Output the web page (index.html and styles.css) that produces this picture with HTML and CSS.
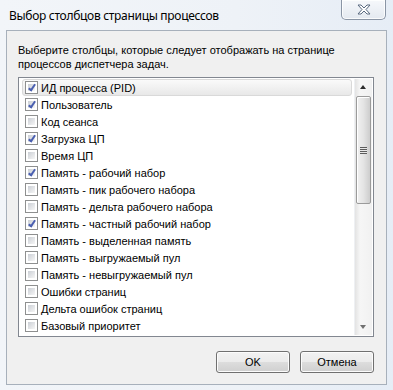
FILE: index.html
```html
<!DOCTYPE html>
<html lang="ru">
<head>
<meta charset="utf-8">
<link rel="stylesheet" href="styles.css">
</head>
<body>
<div class="window">
  <div class="titlebar">
    <span class="title">Выбор столбцов страницы процессов</span>
    <div class="close">
      <svg width="16" height="11" viewBox="0 0 16 11"><path d="M2 1 L5 1 L8 4 L11 1 L14 1 L10 5.5 L14 10 L11 10 L8 7 L5 10 L2 10 L6 5.5 Z" fill="#fff" stroke="#5a6a80" stroke-width="1" stroke-linejoin="round"/></svg>
    </div>
  </div>
  <div class="client">
    <p class="intro">Выберите столбцы, которые следует отображать на странице<br>процессов диспетчера задач.</p>
    <div class="listbox">
      <div class="items">
        <div class="row sel"><span class="cb on"></span>ИД процесса (PID)</div>
        <div class="row"><span class="cb on"></span>Пользователь</div>
        <div class="row"><span class="cb"></span>Код сеанса</div>
        <div class="row"><span class="cb on"></span>Загрузка ЦП</div>
        <div class="row"><span class="cb"></span>Время ЦП</div>
        <div class="row"><span class="cb on"></span>Память - рабочий набор</div>
        <div class="row"><span class="cb"></span>Память - пик рабочего набора</div>
        <div class="row"><span class="cb"></span>Память - дельта рабочего набора</div>
        <div class="row"><span class="cb on"></span>Память - частный рабочий набор</div>
        <div class="row"><span class="cb"></span>Память - выделенная память</div>
        <div class="row"><span class="cb"></span>Память - выгружаемый пул</div>
        <div class="row"><span class="cb"></span>Память - невыгружаемый пул</div>
        <div class="row"><span class="cb"></span>Ошибки страниц</div>
        <div class="row"><span class="cb"></span>Дельта ошибок страниц</div>
        <div class="row"><span class="cb"></span>Базовый приоритет</div>
      </div>
      <div class="scrollbar">
        <div class="arrow up"></div>
        <div class="track">
          <div class="thumb"><span class="grip"></span></div>
        </div>
        <div class="arrow down"></div>
      </div>
    </div>
    <div class="buttons">
      <button class="btn">OK</button>
      <button class="btn">Отмена</button>
    </div>
  </div>
</div>
</body>
</html>
```
FILE: styles.css
```css
html, body {
  margin: 0;
  padding: 0;
}
body {
  width: 393px;
  height: 390px;
  overflow: hidden;
  background: linear-gradient(90deg, #f2f5f9 0%, #eef2f7 60%, #e6edf6 100%);
  font-family: "Liberation Sans", Arial, sans-serif;
  font-size: 11px;
  color: #000;
}
.window {
  width: 393px;
  height: 390px;
  display: flex;
  flex-direction: column;
}
.titlebar {
  height: 30px;
  display: flex;
  align-items: flex-start;
  justify-content: space-between;
  padding-left: 9px;
  padding-right: 7px;
  box-sizing: border-box;
}
.title {
  margin-top: 8px;
  font-family: "Noto Sans", "Open Sans", sans-serif;
  font-size: 12px;
  letter-spacing: -0.3px;
  line-height: 16px;
  color: #000;
}
.close {
  width: 45px;
  height: 20px;
  box-sizing: border-box;
  border: 1px solid #8a95a5;
  border-top: none;
  border-radius: 0 0 5px 5px;
  background: linear-gradient(#f6f8fb, #e4e9f0);
  display: flex;
  align-items: center;
  justify-content: center;
  box-shadow: inset 0 0 0 1px rgba(255,255,255,0.8);
}
.client {
  margin: 0 6px 0 6px;
  height: 355px;
  box-sizing: border-box;
  border: 1px solid #a7b0bb;
  background: #f0f0f0;
  display: flex;
  flex-direction: column;
  padding: 0 12px 0 11px;
}
.intro {
  margin: 12px 0 0 0;
  line-height: 14px;
  font-size: 11px;
  white-space: nowrap;
}
.listbox {
  margin-top: 6px;
  height: 260px;
  box-sizing: border-box;
  border: 1px solid #828790;
  background: #fff;
  display: flex;
  padding: 1px;
}
.items {
  flex: 1;
  padding: 0 2px;
  display: flex;
  flex-direction: column;
}
.row {
  height: 17px;
  display: flex;
  align-items: center;
  gap: 3px;
  padding-left: 3px;
  box-sizing: border-box;
  white-space: nowrap;
  font-size: 11px;
}
.row.sel {
  border: 1px solid #d9d9d9;
  border-radius: 3px;
  background: linear-gradient(#fafafa, #e8e8e8);
  padding-left: 2px;
}
.cb {
  width: 13px;
  height: 13px;
  box-sizing: border-box;
  border: 1px solid #8e8f8f;
  background: #fff;
  position: relative;
  flex: none;
}
.cb::before {
  content: "";
  position: absolute;
  left: 2px;
  top: 2px;
  width: 7px;
  height: 7px;
  background: linear-gradient(135deg, #cbcfd5, #f6f6f6);
}
.cb.on::after {
  content: "";
  position: absolute;
  left: 4px;
  top: 1px;
  width: 2px;
  height: 6px;
  border-right: 2px solid #4a5fb0;
  border-bottom: 2px solid #4a5fb0;
  transform: rotate(35deg);
}
.scrollbar {
  width: 17px;
  display: flex;
  flex-direction: column;
  background: linear-gradient(90deg, #e3e3e3, #f6f6f6 30%, #f1f1f1);
  border-left: 1px solid #eef0f3;
}
.arrow {
  height: 17px;
  position: relative;
  flex: none;
}
.arrow::after {
  content: "";
  position: absolute;
  left: 5px;
  width: 0;
  height: 0;
  border-left: 3.5px solid transparent;
  border-right: 3.5px solid transparent;
}
.arrow.up::after {
  top: 6px;
  border-bottom: 4px solid #2c2c2c;
}
.arrow.down::after {
  top: 7px;
  border-top: 4px solid #707070;
}
.track {
  flex: 1;
  padding: 0 1px;
}
.thumb {
  height: 108px;
  box-sizing: border-box;
  border: 1px solid #9b9b9b;
  border-radius: 2px;
  background: linear-gradient(90deg, #f1f1f1, #e4e4e4 50%, #cdcdcd);
  box-shadow: inset 1px 1px 0 #fff;
  display: flex;
  align-items: center;
  justify-content: center;
}
.grip {
  width: 7px;
  height: 7px;
  background: repeating-linear-gradient(#5c5c5c 0 1px, #e8e8e8 1px 2px);
}
.buttons {
  display: flex;
  justify-content: flex-end;
  gap: 10px;
  margin-top: 14px;
}
.btn {
  width: 74px;
  height: 22px;
  box-sizing: border-box;
  border: 1px solid #707070;
  border-radius: 3px;
  background: linear-gradient(#f2f2f2 0%, #ebebeb 50%, #dddddd 51%, #cfcfcf 100%);
  box-shadow: inset 0 0 0 1px #fcfcfc;
  font-family: "Liberation Sans", Arial, sans-serif;
  font-size: 11px;
  color: #000;
  padding: 0;
}
```
